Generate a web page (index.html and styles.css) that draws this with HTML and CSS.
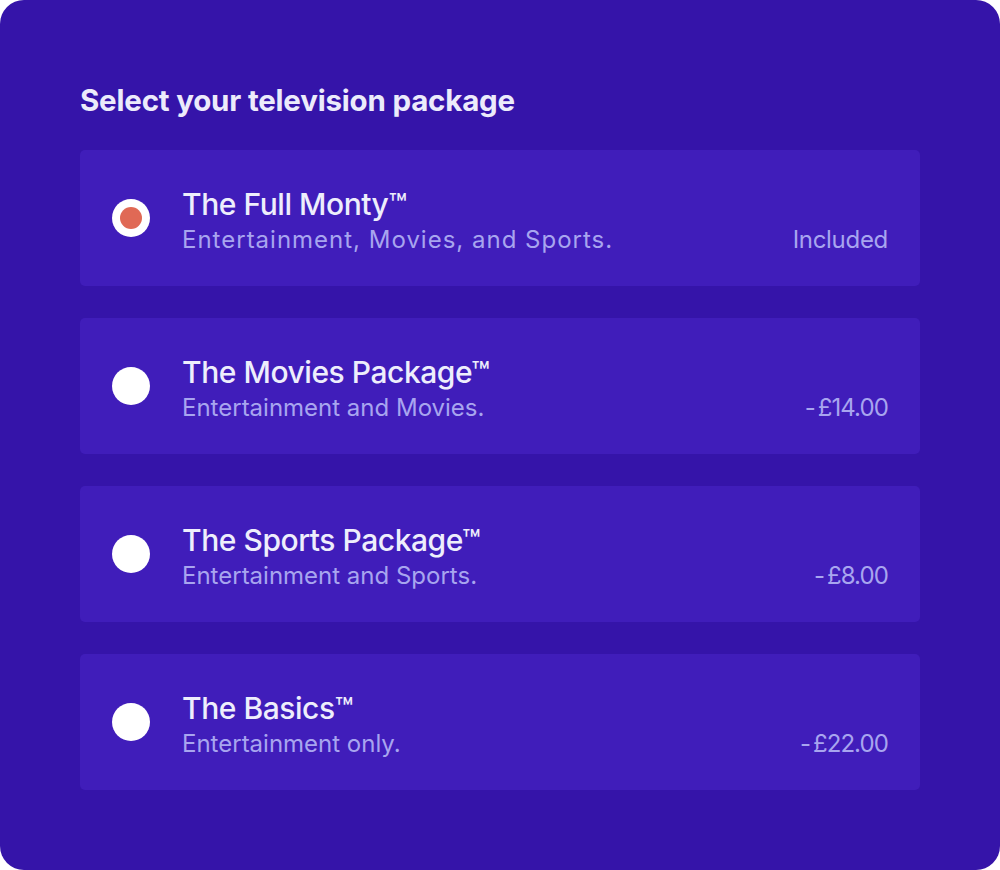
FILE: index.html
```html
<!DOCTYPE html>
<html lang="en">
<head>
<meta charset="utf-8">
<title>Select your television package</title>
<link rel="stylesheet" href="styles.css">
</head>
<body>
<main class="card">
  <h1 class="heading">Select your television package</h1>
  <div class="options">
    <label class="option">
      <span class="radio selected"><span class="dot"></span></span>
      <span class="text">
        <span class="title">The Full Monty™</span>
        <span class="line">
          <span class="desc desc-wide">Entertainment, Movies, and Sports.</span>
          <span class="price">Included</span>
        </span>
      </span>
    </label>
    <label class="option">
      <span class="radio"></span>
      <span class="text">
        <span class="title">The Movies Package™</span>
        <span class="line">
          <span class="desc">Entertainment and Movies.</span>
          <span class="price amount">- £14.00</span>
        </span>
      </span>
    </label>
    <label class="option">
      <span class="radio"></span>
      <span class="text">
        <span class="title">The Sports Package™</span>
        <span class="line">
          <span class="desc">Entertainment and Sports.</span>
          <span class="price amount">- £8.00</span>
        </span>
      </span>
    </label>
    <label class="option">
      <span class="radio"></span>
      <span class="text">
        <span class="title">The Basics™</span>
        <span class="line">
          <span class="desc">Entertainment only.</span>
          <span class="price amount">- £22.00</span>
        </span>
      </span>
    </label>
  </div>
</main>
</body>
</html>
```
FILE: styles.css
```css
html, body {
  margin: 0;
  padding: 0;
  background: #ffffff;
}
body {
  font-family: Inter, "Noto Sans", sans-serif;
}
.card {
  box-sizing: border-box;
  width: 1000px;
  height: 870px;
  background: #3514a9;
  border-radius: 24px;
  padding: 82px 80px 0 80px;
}
.heading {
  margin: 0 0 32px 0;
  font-size: 29.5px;
  line-height: 36px;
  font-weight: 700;
  color: #ecebfb;
  letter-spacing: -0.2px;
}
.options {
  display: flex;
  flex-direction: column;
  gap: 32px;
}
.option {
  box-sizing: border-box;
  height: 136px;
  background: #401dba;
  border-radius: 5px;
  display: flex;
  align-items: center;
  padding: 0 32px;
}
.radio {
  width: 38px;
  height: 38px;
  border-radius: 50%;
  background: #ffffff;
  flex: none;
  display: flex;
  align-items: center;
  justify-content: center;
  margin-right: 32px;
}
.dot {
  width: 22px;
  height: 22px;
  border-radius: 50%;
  background: #e06955;
}
.text {
  display: flex;
  flex-direction: column;
  flex: 1;
  padding-top: 7px;
}
.title {
  font-size: 30px;
  line-height: 36px;
  font-weight: 500;
  color: #eeeefc;
  letter-spacing: -0.45px;
}
.line {
  display: flex;
  justify-content: space-between;
  align-items: baseline;
}
.desc {
  font-size: 24px;
  line-height: 36px;
  color: #a8a5ef;
}
.desc-wide {
  letter-spacing: 1px;
}
.price {
  font-size: 24px;
  line-height: 36px;
  color: #a8a5ef;
  letter-spacing: -0.3px;
}
.amount {
  letter-spacing: -0.9px;
  word-spacing: -3px;
}
```
